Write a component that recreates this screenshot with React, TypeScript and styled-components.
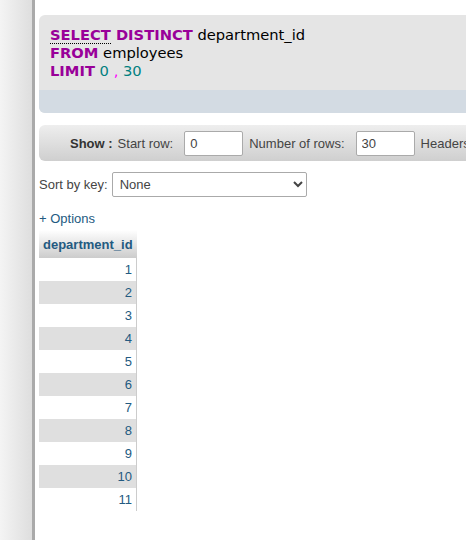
import React from "react";
import styled, { createGlobalStyle } from "styled-components";

const GlobalStyle = createGlobalStyle`
  html, body {
    margin: 0;
    padding: 0;
    background: #fff;
    overflow: hidden;
  }
  body {
    font-family: "Liberation Sans", Arial, sans-serif;
    font-size: 13px;
    color: #444;
  }
`;

const Page = styled.div`
  display: flex;
  width: 466px;
  height: 540px;
  overflow: hidden;
`;

const NavEdge = styled.div`
  flex: 0 0 32px;
  background: linear-gradient(to right, #f4f4f4, #dedede);
  border-right: 3px solid #aaa;
`;

const Main = styled.div`
  flex: 1;
  min-width: 0;
  padding: 15px 0 0 4px;
  overflow: hidden;
`;

const SqlBox = styled.div`
  margin-right: -12px;
  border-radius: 6px;
  overflow: hidden;
  background: #e5e5e5;
`;

const SqlCode = styled.div`
  padding: 11px 0 10px 11px;
  font-family: "DejaVu Sans", Verdana, sans-serif;
  font-size: 14.7px;
  line-height: 18px;
  color: #000;
  white-space: pre;
`;

const Keyword = styled.span`
  color: #990099;
  font-weight: bold;
`;

const DocLink = styled.a`
  color: inherit;
  text-decoration: none;
  border-bottom: 1px dotted #000;
`;

const NumberTok = styled.span<{ $punct?: boolean }>`
  color: ${(p) => (p.$punct ? "#ff00ff" : "#008080")};
`;

const SqlFooter = styled.div`
  height: 23px;
  background: #d3dbe3;
`;

const ShowBar = styled.div`
  display: flex;
  align-items: center;
  margin: 12px -12px 0 0;
  padding: 6px 0 5px 31px;
  border-radius: 6px;
  background: linear-gradient(to bottom, #eeeeee, #cfcfcf);
  white-space: nowrap;
`;

const ShowLabel = styled.span`
  font-weight: bold;
  color: #333;
  margin-right: 5px;
`;

const BarLabel = styled.span`
  color: #444;
  margin-right: 11px;
`;

const TextInput = styled.input`
  box-sizing: border-box;
  width: 59px;
  height: 25px;
  margin: 0 6px 0 0;
  padding: 0 5px;
  border: 1px solid #aaa;
  border-radius: 2px;
  background: #fff;
  font-family: "Liberation Sans", Arial, sans-serif;
  font-size: 13px;
  color: #444;
  outline: none;
`;

const SortRow = styled.div`
  display: flex;
  align-items: center;
  margin-top: 11px;
  white-space: nowrap;
`;

const SortLabel = styled.label`
  color: #444;
  margin-right: 4px;
`;

const KeySelect = styled.select`
  box-sizing: border-box;
  width: 195px;
  height: 25px;
  padding: 0 3px;
  border: 1px solid #aaa;
  border-radius: 2px;
  background: #fff;
  font-family: "Liberation Sans", Arial, sans-serif;
  font-size: 13px;
  color: #444;
`;

const OptionsLink = styled.a`
  display: block;
  margin-top: 14px;
  color: #235a81;
  text-decoration: none;
  line-height: 16px;
`;

const ResultTable = styled.table`
  margin-top: 3px;
  border-collapse: collapse;
`;

const HeadCell = styled.th`
  padding: 6px 4px 5px;
  background: linear-gradient(to bottom, #ffffff, #cccccc);
  color: #235a81;
  font-weight: bold;
  text-align: left;
  line-height: 17px;
`;

const DataRow = styled.tr<{ $even: boolean }>`
  background: ${(p) => (p.$even ? "#dfdfdf" : "#fff")};
`;

const DataCell = styled.td`
  height: 23px;
  box-sizing: border-box;
  padding: 0 4px;
  text-align: right;
  color: #235a81;
  border-right: 1px solid #ccc;
  font-size: 13px;
`;

const ids = [1, 2, 3, 4, 5, 6, 7, 8, 9, 10, 11];

export default function App() {
  return (
    <>
      <GlobalStyle />
      <Page>
        <NavEdge />
        <Main>
          <SqlBox>
            <SqlCode>
              <Keyword>
                <DocLink href="#">SELECT</DocLink> DISTINCT
              </Keyword>{" "}
              department_id
              {"\n"}
              <Keyword>FROM</Keyword> employees
              {"\n"}
              <Keyword>LIMIT</Keyword> <NumberTok>0</NumberTok>{" "}
              <NumberTok $punct>,</NumberTok> <NumberTok>30</NumberTok>
            </SqlCode>
            <SqlFooter />
          </SqlBox>

          <ShowBar>
            <ShowLabel>Show :</ShowLabel>
            <BarLabel>Start row:</BarLabel>
            <TextInput defaultValue="0" />
            <BarLabel>Number of rows:</BarLabel>
            <TextInput defaultValue="30" />
            <BarLabel>Headers every</BarLabel>
          </ShowBar>

          <SortRow>
            <SortLabel>Sort by key:</SortLabel>
            <KeySelect defaultValue="None">
              <option>None</option>
            </KeySelect>
          </SortRow>

          <OptionsLink href="#">+ Options</OptionsLink>

          <ResultTable>
            <thead>
              <tr>
                <HeadCell>department_id</HeadCell>
              </tr>
            </thead>
            <tbody>
              {ids.map((id, i) => (
                <DataRow key={id} $even={i % 2 === 1}>
                  <DataCell>{id}</DataCell>
                </DataRow>
              ))}
            </tbody>
          </ResultTable>
        </Main>
      </Page>
    </>
  );
}
